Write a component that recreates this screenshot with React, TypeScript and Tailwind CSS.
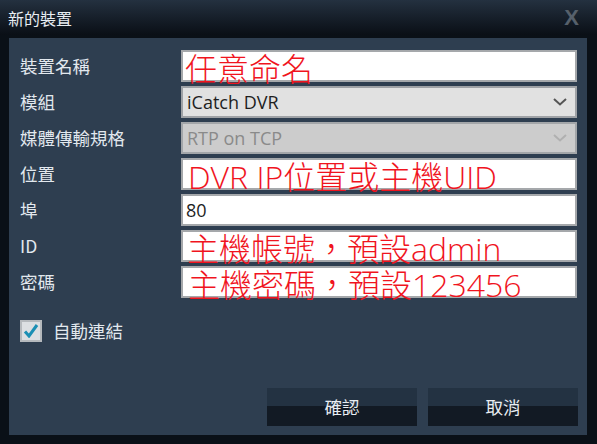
import React from 'react';

const cjk = { fontFamily: '"Noto Sans CJK TC", "Noto Sans", sans-serif' };
const latin = { fontFamily: '"Open Sans", "Noto Sans CJK TC", sans-serif' };

const Chevron = ({ color }: { color: string }) => (
    <svg width="14" height="8" viewBox="0 0 14 8" fill="none">
        <path d="M1 1l6 5.5L13 1" stroke={color} strokeWidth={2} />
    </svg>
);

const labels = ['裝置名稱', '模組', '媒體傳輸規格', '位置', '埠', 'ID', '密碼'];

// red hint text written into the white fields
const Hint = ({ text, pl }: { text: string; pl: string }) => (
    <div className={`h-8 bg-white border-2 border-[#a5a8ab] pt-[3px] overflow-visible ${pl}`}>
        <div className="h-[26px] text-[32px] leading-[28px] font-light text-[#f0141e] whitespace-nowrap" style={latin}>{text}</div>
    </div>
);

export default function App() {
    return (
        <div className="w-[597px] h-[444px] bg-[#0a1017] flex flex-col overflow-hidden" style={cjk}>
            {/* title bar */}
            <div className="h-[35px] flex items-center justify-between pl-2 pr-[18px] bg-gradient-to-b from-[#243140] to-[#0a0f16]">
                <span className="text-[16px] text-[#e8edf2]">新的裝置</span>
                <span className="text-[22px] text-[#56606b] font-bold leading-none" style={{ fontFamily: '"Liberation Sans", sans-serif' }}>X</span>
            </div>
            <div className="h-[3px]" />

            <div className="ml-[9px] mr-[10px] h-[397px] bg-[#2e3e50] flex flex-col pt-3 pr-[9px] pl-[11px] pb-[9px]">
                <div className="grid grid-cols-[161px_396px] gap-y-1">
                    {labels.map((l) => (
                        <div key={l} className="contents">
                            <div className="h-8 flex items-center text-[17.5px] text-[#e2e8ee]">{l}</div>
                            {l === '裝置名稱' && <Hint text="任意命名" pl="pl-[2px]" />}
                            {l === '模組' && (
                                <div className="h-8 bg-[#e1e1e1] border-2 border-[#9fa2a6] flex items-center justify-between pl-[4px] pr-[8px] text-[18px] text-[#1e1e1e]" style={latin}>
                                    <span>iCatch DVR</span>
                                    <Chevron color="#555" />
                                </div>
                            )}
                            {l === '媒體傳輸規格' && (
                                <div className="h-8 bg-[#cccccc] border-2 border-[#a3a6a9] flex items-center justify-between pl-[4px] pr-[8px] text-[18px] text-[#8a8a8a]" style={latin}>
                                    <span>RTP on TCP</span>
                                    <Chevron color="#b0b0b0" />
                                </div>
                            )}
                            {l === '位置' && <Hint text="DVR IP位置或主機UID" pl="pl-[5px]" />}
                            {l === '埠' && (
                                <div className="h-8 bg-white border-2 border-[#a5a8ab] flex items-center pl-[3px] text-[18px] text-[#1e1e1e]" style={latin}>80</div>
                            )}
                            {l === 'ID' && <Hint text="主機帳號，預設admin" pl="pl-[4px]" />}
                            {l === '密碼' && <Hint text="主機密碼，預設123456" pl="pl-[5px]" />}
                        </div>
                    ))}
                </div>

                <div className="mt-5 flex items-center gap-[11px]">
                    <div className="w-[22px] h-[22px] bg-[#dcdfe2] border-2 border-[#b5b9bd] flex items-center justify-center">
                        <svg width="16" height="14" viewBox="0 0 16 14" fill="none">
                            <path d="M2 7.5l4 4.5 8-11" stroke="#1b8fb4" strokeWidth={3} />
                        </svg>
                    </div>
                    <span className="text-[17.5px] text-[#e2e8ee]">自動連結</span>
                </div>

                <div className="flex-1" />

                <div className="flex justify-end gap-[11px]">
                    {['確認', '取消'].map((t) => (
                        <button key={t} className="relative w-[150px] h-[38px] flex flex-col">
                            <div className="h-[18px] bg-[#233242]" />
                            <div className="flex-1 bg-[#121a24]" />
                            <span className="absolute inset-0 flex items-center justify-center text-[17.5px] text-[#e8edf2]">{t}</span>
                        </button>
                    ))}
                </div>
            </div>
        </div>
    );
}
